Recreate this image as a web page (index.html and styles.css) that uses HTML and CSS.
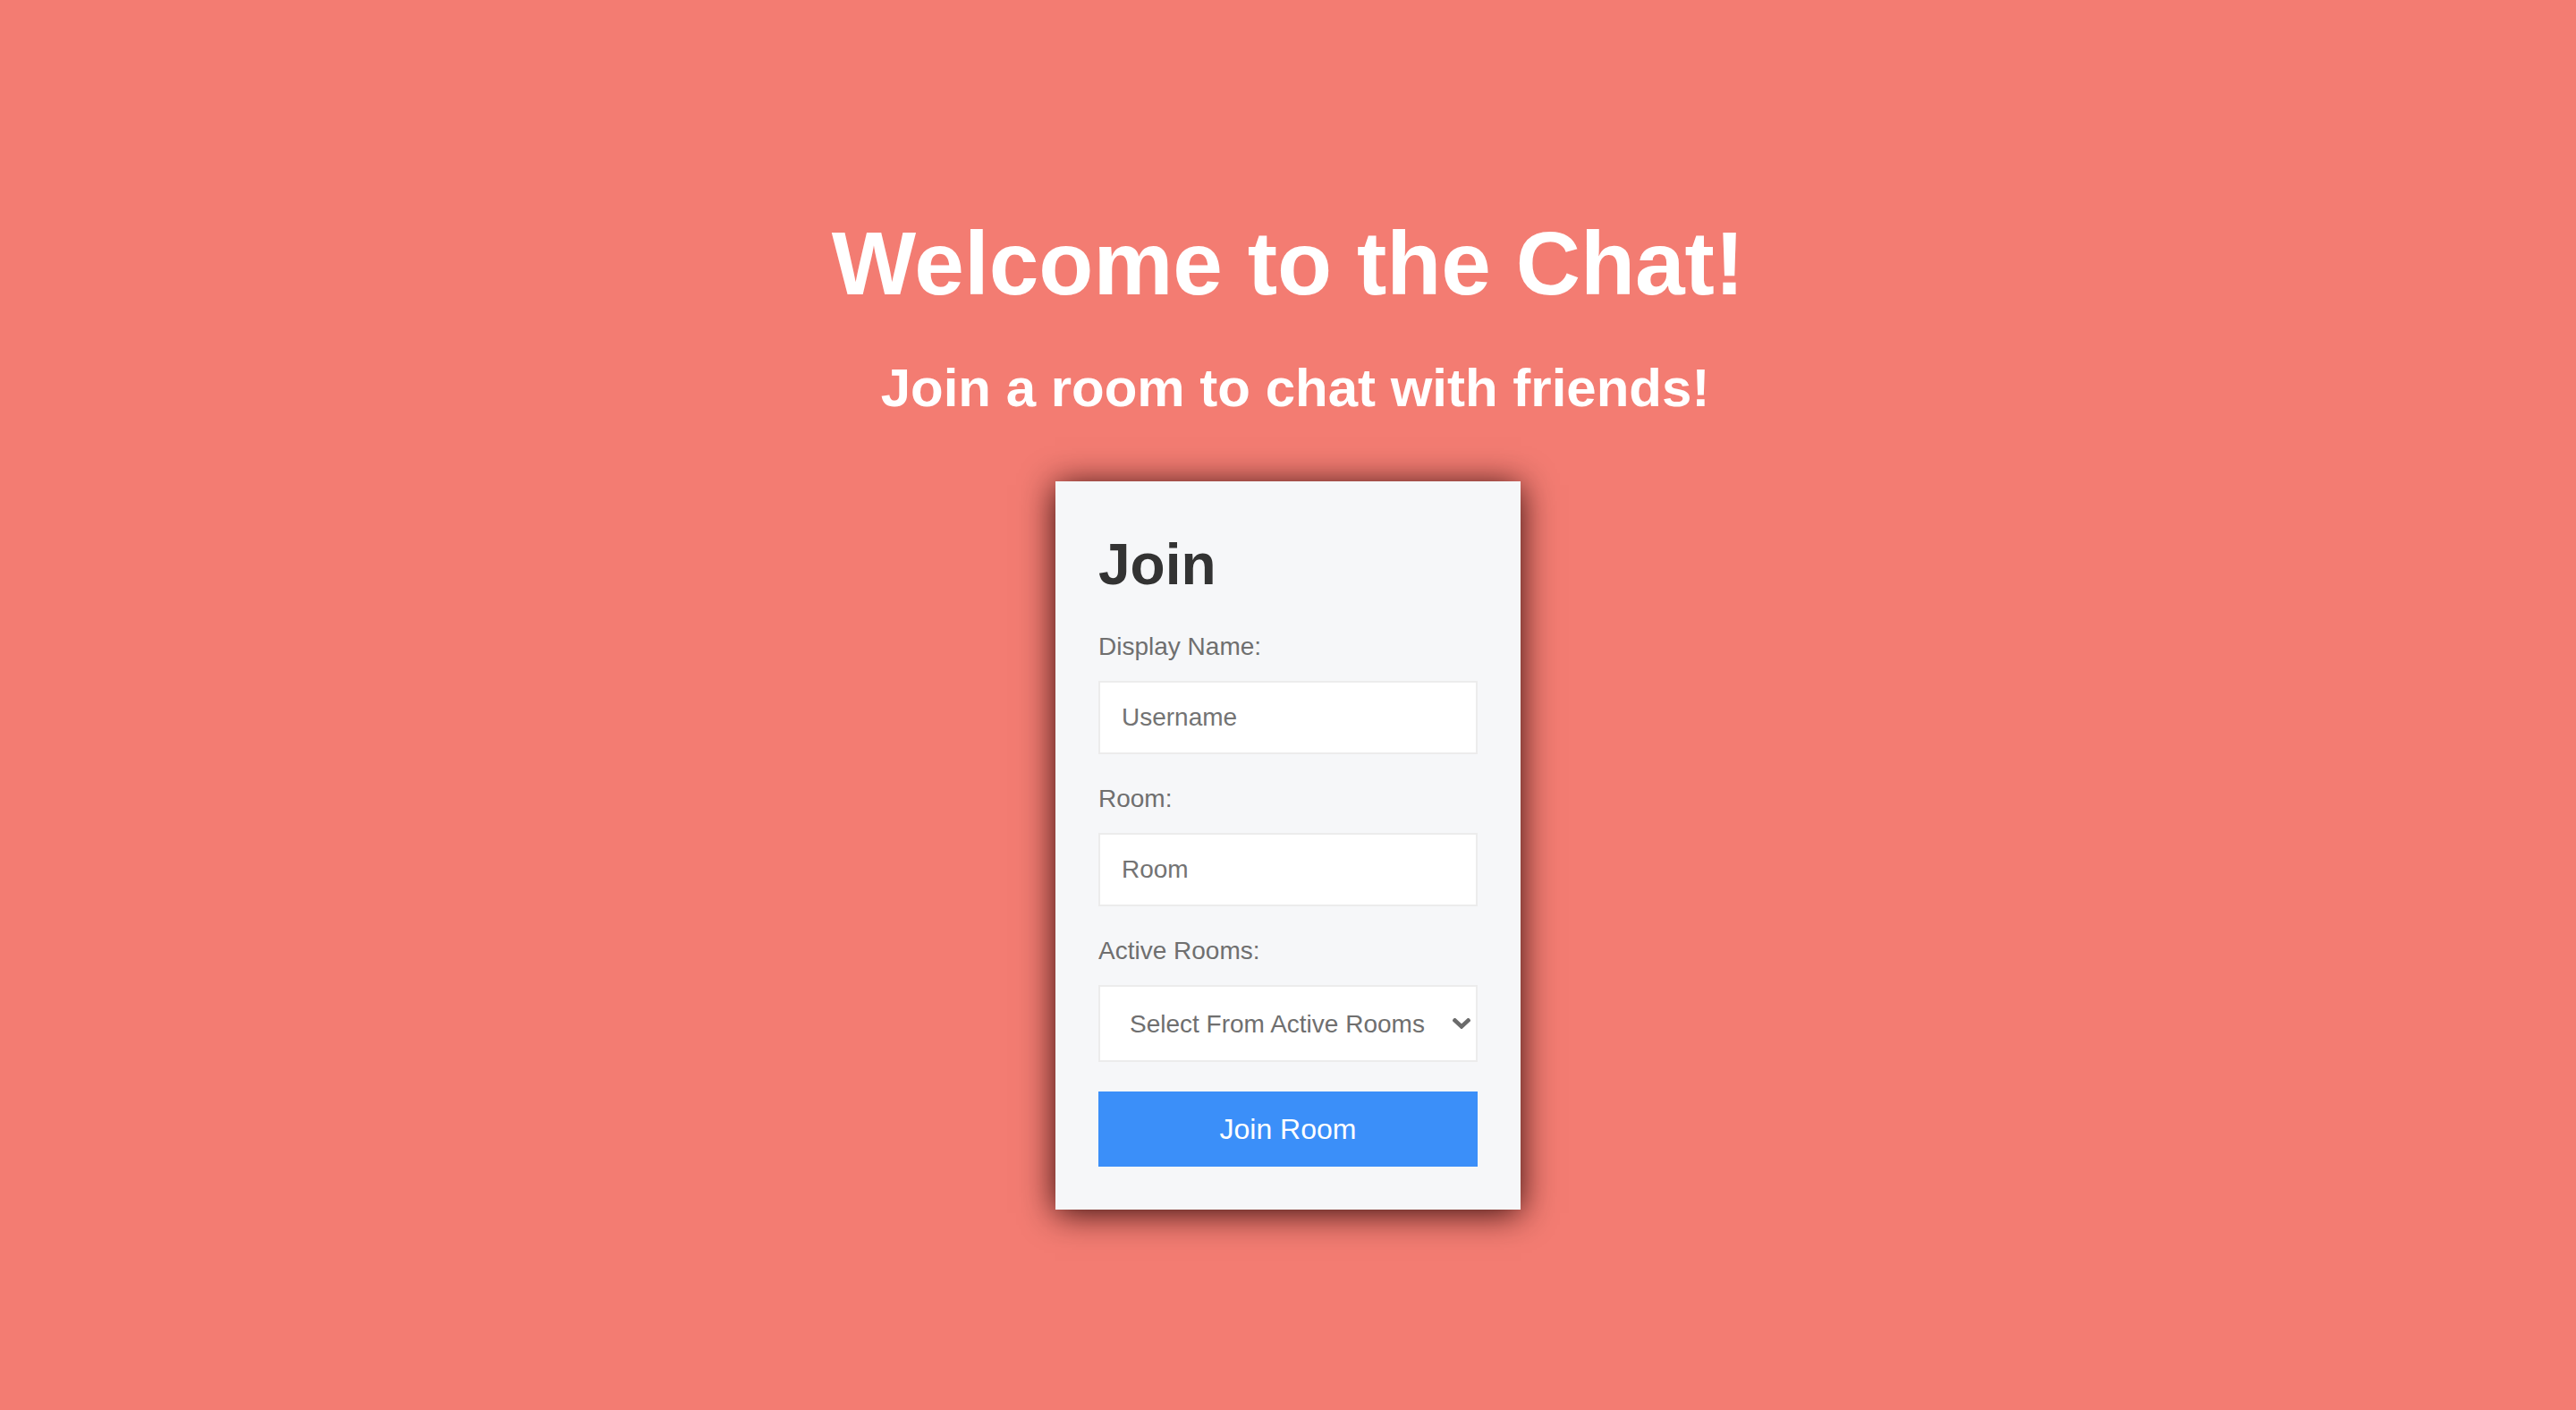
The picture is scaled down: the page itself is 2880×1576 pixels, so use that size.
FILE: index.html
```html
<!DOCTYPE html>
<html lang="en">
<head>
<meta charset="utf-8">
<title>Chat</title>
<link rel="stylesheet" href="styles.css">
</head>
<body>
<main class="page">
  <h1 class="title">Welcome to the Chat!</h1>
  <h2 class="subtitle">Join a room to chat with friends!</h2>
  <form class="card">
    <h1 class="card-title">Join</h1>
    <label class="field-label" for="username">Display Name:</label>
    <input class="field-input" id="username" type="text" placeholder="Username">
    <label class="field-label" for="room">Room:</label>
    <input class="field-input" id="room" type="text" placeholder="Room">
    <label class="field-label" for="active">Active Rooms:</label>
    <div class="select-wrap">
      <select class="field-select" id="active">
        <option>Select From Active Rooms</option>
      </select>
      <svg class="chevron" width="20" height="12" viewBox="0 0 20 12" aria-hidden="true">
        <path d="M2.5 2.5 L10 9.5 L17.5 2.5" fill="none" stroke="#6b6b6b" stroke-width="4.5" stroke-linecap="square" stroke-linejoin="miter"/>
      </svg>
    </div>
    <button class="join-btn" type="button">Join Room</button>
  </form>
</main>
</body>
</html>
```
FILE: styles.css
```css
html, body {
  margin: 0;
  padding: 0;
}
body {
  background: #f37c72;
  font-family: "Liberation Sans", Arial, Helvetica, sans-serif;
  min-height: 1576px;
}
.page {
  display: flex;
  flex-direction: column;
  align-items: center;
  padding-top: 237px;
}
.title {
  margin: 0 0 47px;
  font-size: 100px;
  line-height: 115px;
  font-weight: 700;
  color: #ffffff;
  text-align: center;
}
.subtitle {
  margin: 0 0 70px;
  padding-left: 16px;
  font-size: 60px;
  line-height: 69px;
  font-weight: 700;
  color: #ffffff;
  text-align: center;
}
.card {
  box-sizing: border-box;
  width: 520px;
  padding: 56px 48px 48px;
  background: #f6f7f9;
  box-shadow: 0 4px 36px rgba(30, 0, 0, 0.9);
  display: flex;
  flex-direction: column;
}
.card-title {
  margin: 0 0 39px;
  font-size: 64px;
  line-height: 74px;
  font-weight: 700;
  color: #333333;
}
.field-label {
  display: block;
  font-size: 28px;
  line-height: 32px;
  color: #6f6f6f;
  margin-bottom: 22px;
}
.field-input,
.field-select {
  box-sizing: border-box;
  width: 100%;
  border: 2px solid #ececec;
  border-radius: 0;
  background: #ffffff;
  font-family: "Liberation Sans", Arial, Helvetica, sans-serif;
  font-size: 28px;
  color: #6f6f6f;
  outline: none;
  margin: 0;
}
.field-input {
  height: 82px;
  padding: 0 24px;
  margin-bottom: 34px;
}
.field-input::placeholder {
  color: #737373;
  opacity: 1;
}
.select-wrap {
  position: relative;
  margin-bottom: 33px;
}
.field-select {
  display: block;
  height: 86px;
  padding: 0 50px 0 33px;
  appearance: none;
  -webkit-appearance: none;
  color: #6f6f6f;
}
.chevron {
  position: absolute;
  right: 8px;
  top: 37px;
  pointer-events: none;
}
.join-btn {
  display: block;
  width: 100%;
  height: 84px;
  border: 0;
  border-radius: 0;
  background: #3b8ff9;
  color: #ffffff;
  font-family: "Liberation Sans", Arial, Helvetica, sans-serif;
  font-size: 32px;
  padding: 0;
  margin: 0;
  cursor: pointer;
}
```
